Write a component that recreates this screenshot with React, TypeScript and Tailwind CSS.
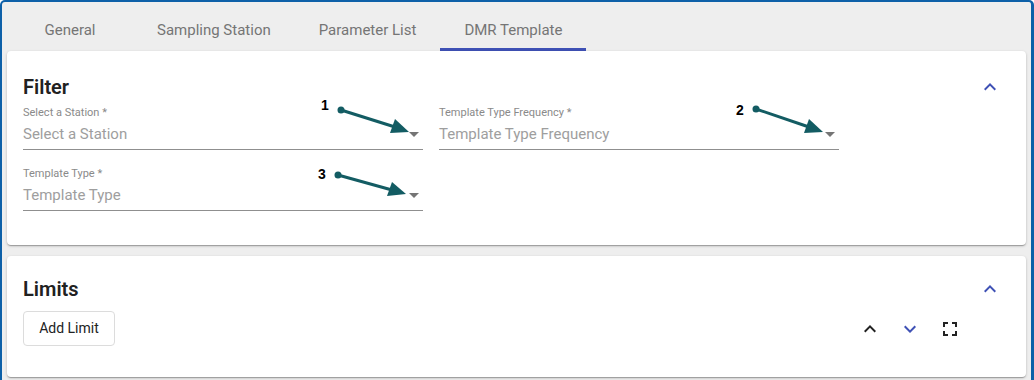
import type { ReactNode } from 'react';

const tabs = ['General', 'Sampling Station', 'Parameter List', 'DMR Template'];
const activeTab = 'DMR Template';

const ChevronUp = ({ className }: { className: string }) => (
  <svg width="24" height="24" viewBox="0 0 24 24" className={className}>
    <path d="M12 8l-6 6 1.41 1.41L12 10.83l4.59 4.58L18 14z" fill="currentColor" />
  </svg>
);

const ChevronDown = ({ className }: { className: string }) => (
  <svg width="24" height="24" viewBox="0 0 24 24" className={className}>
    <path d="M16.59 8.59L12 13.17 7.41 8.59 6 10l6 6 6-6z" fill="currentColor" />
  </svg>
);

const Fullscreen = ({ className }: { className: string }) => (
  <svg width="24" height="24" viewBox="0 0 24 24" className={className}>
    <path d="M7 14H5v5h5v-2H7v-3zm-2-4h2V7h3V5H5v5zm12 7h-3v2h5v-5h-2v3zM14 5v2h3v3h2V5h-5z" fill="currentColor" />
  </svg>
);

function SelectField({ label, placeholder }: { label: string; placeholder: string }) {
  return (
    <div className="w-[400px]">
      <div className="text-[11px] leading-[14px] text-[#8a8a8a]">{label}</div>
      <div className="mt-[2px] box-content flex h-[24px] items-center justify-between border-b border-[#8f8f8f] pb-[3px]">
        <span className="text-[15px] text-[#9e9e9e]">{placeholder}</span>
        <span className="mr-[4px] h-0 w-0 border-x-[5px] border-t-[5px] border-x-transparent border-t-[#757575]" />
      </div>
    </div>
  );
}

function Card({ title, children, className }: { title: string; children: ReactNode; className: string }) {
  return (
    <section className={`rounded-[4px] bg-white px-4 shadow-[0_1px_3px_rgba(0,0,0,0.2),0_1px_1px_rgba(0,0,0,0.14),0_2px_1px_-1px_rgba(0,0,0,0.12)] ${className}`}>
      <div className="flex h-[28px] items-center justify-between">
        <h2 className="text-[20px] font-semibold text-[#212121]">{title}</h2>
        <ChevronUp className="mr-[8px] text-[#3f51b5]" />
      </div>
      {children}
    </section>
  );
}

export default function App() {
  return (
    <div className="relative h-[380px] w-[1034px] overflow-hidden rounded-t-[5px] border-l-2 border-r-[3px] border-t-2 border-[#0d60a8] bg-[#eeeeee] font-['Roboto',sans-serif]">
      <nav className="ml-[5px] flex h-[49px]">
        {tabs.map((tab) => (
          <div
            key={tab}
            className={`flex items-center justify-center pt-2 text-[15px] text-[#757575] ${tab === 'General' ? 'w-[126px]' : 'px-6'} ${tab === activeTab ? 'border-b-[3px] border-[#3f51b5] pt-[11px]' : ''}`}
          >
            {tab}
          </div>
        ))}
      </nav>

      <div className="mx-[5px] flex flex-col gap-[11px]">
        <Card title="Filter" className="pb-[34px] pt-[22px]">
          <div className="mt-[5px] flex flex-col gap-[17px]">
            <div className="flex gap-4">
              <SelectField label="Select a Station *" placeholder="Select a Station" />
              <SelectField label="Template Type Frequency *" placeholder="Template Type Frequency" />
            </div>
            <SelectField label="Template Type *" placeholder="Template Type" />
          </div>
        </Card>

        <Card title="Limits" className="pb-[31px] pt-[19px]">
          <div className="mt-2 flex items-center justify-between">
            <button type="button" className="h-[35px] w-[92px] rounded-[4px] border border-[#dcdcdc] text-[14px] text-[#222222]">
              Add Limit
            </button>
            <div className="mr-[48px] flex items-center gap-4">
              <ChevronUp className="text-[#222222]" />
              <ChevronDown className="text-[#3f51b5]" />
              <Fullscreen className="text-[#222222]" />
            </div>
          </div>
        </Card>
      </div>

      <svg className="pointer-events-none absolute left-[-2px] top-[-2px]" width="1034" height="380">
        <g fill="#135c63" stroke="#135c63">
          <circle cx="341" cy="110" r="3.5" stroke="none" />
          <line x1="341" y1="110" x2="395" y2="127" strokeWidth="3" />
          <polygon points="409,132 390,133 395,119" stroke="none" />
          <circle cx="756" cy="109" r="3.5" stroke="none" />
          <line x1="756" y1="109" x2="809" y2="127" strokeWidth="3" />
          <polygon points="823,132 804,133 809,119" stroke="none" />
          <circle cx="338" cy="175" r="3.5" stroke="none" />
          <line x1="338" y1="175" x2="392" y2="190" strokeWidth="3" />
          <polygon points="406,194 387,196 392,182" stroke="none" />
        </g>
        <g fontFamily="'Liberation Sans', sans-serif" fontWeight="700" fontSize="14" fill="#000">
          <text x="321" y="110">1</text>
          <text x="736" y="115">2</text>
          <text x="318" y="179">3</text>
        </g>
      </svg>
    </div>
  );
}
